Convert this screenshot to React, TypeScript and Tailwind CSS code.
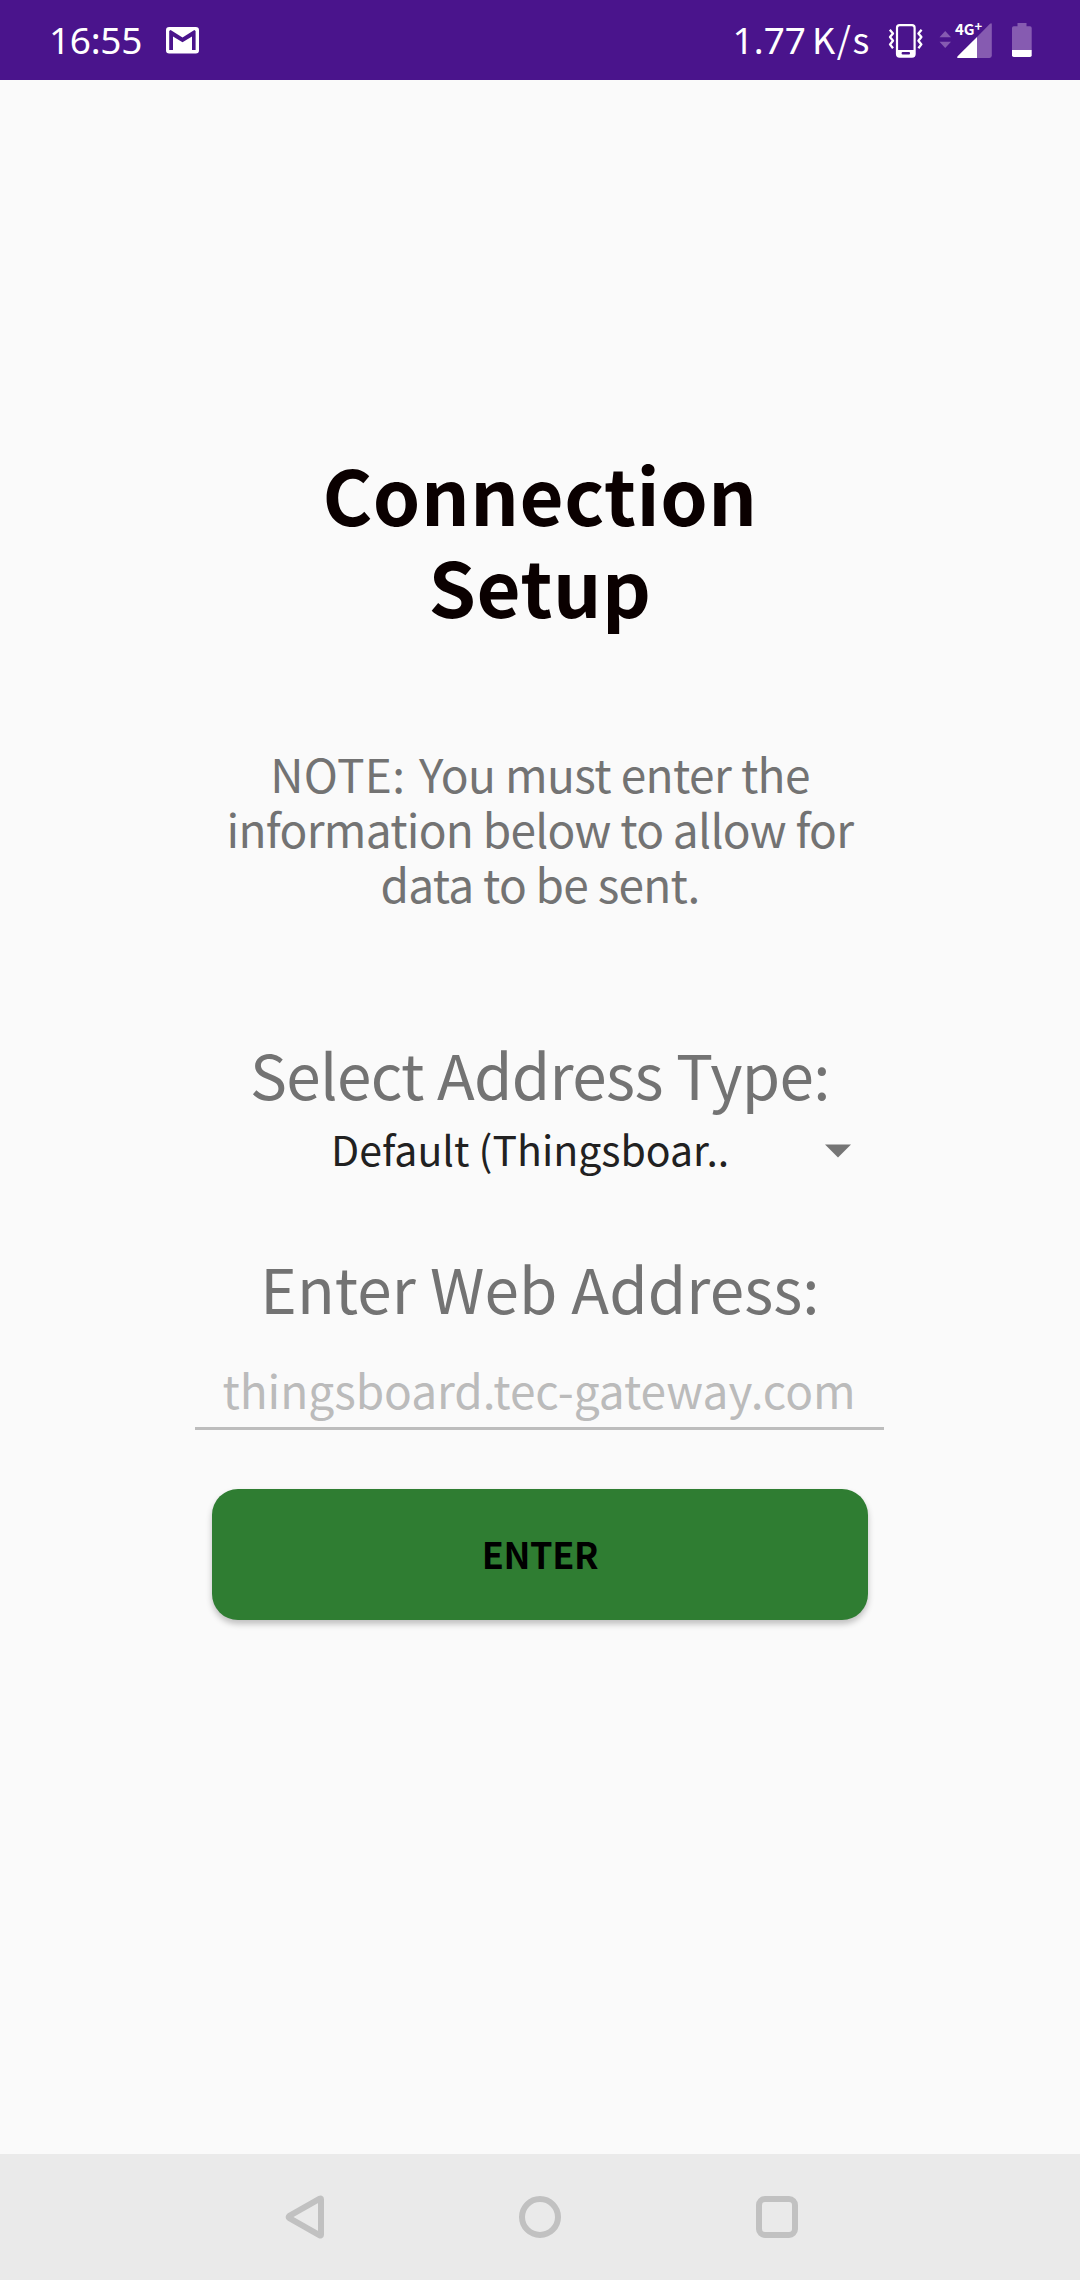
function GmailIcon() {
  return (
    <svg className="ml-[25px] h-[27px] w-[33px]" viewBox="0 0 33 27">
      <path
        fill="#fff"
        fillRule="evenodd"
        d="M3.2 0H29.8A3.2 3.2 0 0 1 33 3.2V23.3A3.2 3.2 0 0 1 29.8 26.5H3.2A3.2 3.2 0 0 1 0 23.3V3.2A3.2 3.2 0 0 1 3.2 0ZM3.2 4V23H7V9.4L16.5 15.2L26 9.4V23H29.6V4L28.4 3L16.5 10.4L4.6 3Z"
      />
    </svg>
  );
}

function VibrateIcon() {
  return (
    <svg className="mt-[2px] h-[34px] w-[36px]" viewBox="0 0 36 34" fill="none" stroke="#fff">
      <rect x="9" y="1.2" width="17.6" height="31.4" rx="2.6" strokeWidth="2.2" />
      <path d="M9 26H26.6V31.4Q26.6 32.6 25.4 32.6H10.2Q9 32.6 9 31.4Z" fill="#fff" stroke="none" />
      <rect x="13.6" y="28" width="8.4" height="2.6" rx="1" fill="#4a148c" stroke="none" />
      <g strokeWidth="2.3" strokeLinejoin="round">
        <path d="M1.8 5.8L5 9.4L2 13L5 16.8L2 20.4L5 24.2" />
        <path d="M33.6 5.8L30.4 9.4L33.4 13L30.4 16.8L33.4 20.4L30.4 24.2" />
      </g>
    </svg>
  );
}

function SignalIcon() {
  return (
    <div className="relative mt-[2px] ml-[15px] h-[36px] w-[54px]">
      <svg className="h-[36px] w-[54px]" viewBox="0 0 54 36">
        <path d="M0.5 14.3L6.2 8L12 14.3ZM0.5 18.8H12L6.2 25Z" fill="#865bb1" />
        <path d="M51 0.8Q52.8 -0.6 52.8 1.5V32.6Q52.8 35 50.6 35H38V14Z" fill="#865bb1" />
        <path d="M38 14V35H19.4Q17.4 35 18.6 33.2Z" fill="#fff" />
      </svg>
      <div className="absolute -top-[3px] left-[16px] flex text-[15px] leading-[18px] font-bold text-white">
        <span>4G</span>
        <span className="-mt-[3px] text-[13px]">+</span>
      </div>
    </div>
  );
}

function BatteryIcon() {
  return (
    <svg className="ml-[19px] h-[34px] w-[20px]" viewBox="0 0 20 34">
      <path d="M5.5 0H14.5V3.2H18Q19.7 3.2 19.7 5V27H0V5Q0 3.2 1.8 3.2H5.5Z" fill="#865bb1" />
      <path d="M0 27H19.7V32.2Q19.7 34 18 34H1.8Q0 34 0 32.2Z" fill="#fff" />
    </svg>
  );
}

function StatusBar() {
  return (
    <header className="flex h-20 items-center bg-[#4a148c] pr-[48px] pl-[49px] text-[36px] leading-[48px] text-white">
      <span className="w-[92px] font-['Noto_Sans',sans-serif] text-[37px] tracking-[-0.3px] whitespace-nowrap">16:55</span>
      <GmailIcon />
      <div className="ml-auto flex items-center">
        <span className="font-['Noto_Sans',sans-serif] text-[37px] whitespace-nowrap">1.77</span>
        <span className="-mt-[4px] mr-[17px] ml-[6px] tracking-[1.6px] whitespace-nowrap">K/s</span>
        <VibrateIcon />
        <SignalIcon />
        <BatteryIcon />
      </div>
    </header>
  );
}

function NavBar() {
  return (
    <nav className="flex h-[126px] items-center justify-center bg-[#eaeaea] pl-[2px] text-[#c1c1c1]">
      <svg className="mr-[194px] h-[44px] w-[40px]" viewBox="0 0 40 44" fill="none" stroke="currentColor" strokeWidth="6" strokeLinejoin="round">
        <path d="M36 4.2V39.8Q36 41 34.8 40.3L4.4 23.2Q2.8 22 4.4 20.8L34.8 3.7Q36 3 36 4.2Z" />
      </svg>
      <div className="size-[42px] rounded-full border-[6px] border-current" />
      <div className="ml-[195px] size-[42px] rounded-[9px] border-[6px] border-current" />
    </nav>
  );
}

export default function App() {
  return (
    <div className="flex h-[2280px] w-[1080px] flex-col overflow-hidden bg-[#fafafa] font-['Noto_Sans_CJK_SC','Noto_Sans',sans-serif] text-[#737373]">
      <StatusBar />
      <main className="flex flex-1 flex-col items-center text-center whitespace-nowrap">
        <h1 className="mt-[367px] text-[76px] leading-[92px] font-bold tracking-[0.55px] text-[#0a0000]">
          Connection
          <br />
          Setup
        </h1>
        <p className="mt-[115px] text-[46px] leading-[55px] tracking-[-0.73px]">
          <span className="mr-[4px] tracking-[0.3px]">NOTE:</span>
          <span className="tracking-[-0.6px]"> You must enter the</span>
          <br />
          information below to allow for
          <br />
          data to be sent.
        </p>
        <h2 className="mt-[122px] text-[62px] leading-[80px] tracking-[-0.65px]">Select Address Type:</h2>
        <button className="mt-[9px] flex h-[52px] w-[690px] items-center pr-[34px] pl-[136px] text-[41px] leading-[52px] text-[#212121]">
          <span>Default (Thingsboar..</span>
          <svg className="mt-[5px] ml-auto h-[14px] w-[26px]" viewBox="0 0 26 14">
            <path d="M0 0.5H26L13 13.5Z" fill="#757575" />
          </svg>
        </button>
        <h2 className="mt-[73px] text-[62px] leading-[80px] tracking-[0.1px]">Enter Web Address:</h2>
        <div className="mt-[31px] mr-[2px] h-[72px] w-[689px] border-b-[3px] border-[#bdbdbd] text-[46px] leading-[62px] tracking-[-0.03px] text-[#bbb]">
          thingsboard.tec-gateway.com
        </div>
        <button className="mt-[59px] h-[131px] w-[656px] rounded-[26px] bg-[#2f7d32] pb-[4px] text-[36px] font-bold tracking-[-0.35px] text-black shadow-[0_4px_6px_rgba(0,0,0,0.24)]">
          ENTER
        </button>
      </main>
      <NavBar />
    </div>
  );
}
